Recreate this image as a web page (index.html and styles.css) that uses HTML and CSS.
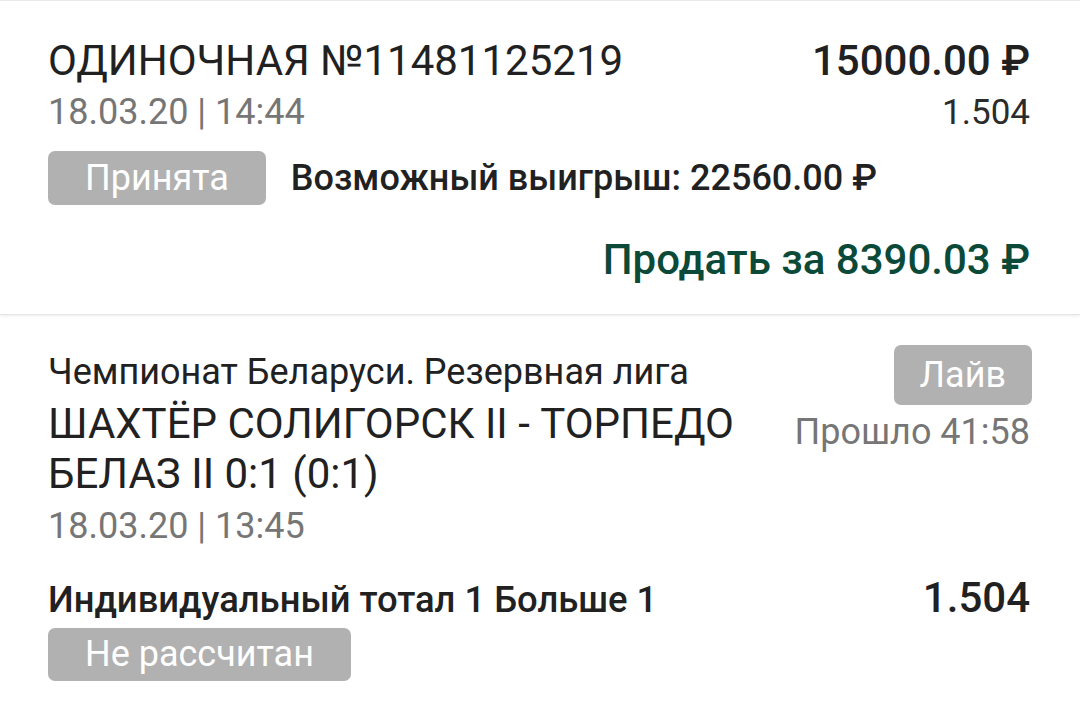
FILE: index.html
```html
<!DOCTYPE html>
<html lang="ru">
<head>
<meta charset="utf-8">
<title>Ставка</title>
<link rel="stylesheet" href="styles.css">
</head>
<body>
<div class="page">
  <section class="card bet">
    <div class="row">
      <div class="bet-title">ОДИНОЧНАЯ №11481125219</div>
      <div class="bet-sum">15000.00 ₽</div>
    </div>
    <div class="row">
      <div class="date">18.03.20 | 14:44</div>
      <div class="coef">1.504</div>
    </div>
    <div class="status-row">
      <span class="badge">Принята</span>
      <span class="win">Возможный выигрыш: 22560.00 ₽</span>
    </div>
    <div class="sell">Продать за 8390.03 ₽</div>
  </section>
  <section class="card event">
    <div class="event-head">
      <div class="event-main">
        <div class="league">Чемпионат Беларуси. Резервная лига</div>
        <div class="match">ШАХТЁР СОЛИГОРСК II - ТОРПЕДО БЕЛАЗ II 0:1 (0:1)</div>
        <div class="date event-date">18.03.20 | 13:45</div>
      </div>
      <div class="event-side">
        <span class="badge live">Лайв</span>
        <div class="elapsed">Прошло 41:58</div>
      </div>
    </div>
    <div class="market-row">
      <div class="market">Индивидуальный тотал 1 Больше 1</div>
      <div class="market-coef">1.504</div>
    </div>
    <span class="badge pending">Не рассчитан</span>
  </section>
</div>
</body>
</html>
```
FILE: styles.css
```css
html, body {
  margin: 0;
  padding: 0;
}
body {
  background: #fff;
  font-family: Roboto, "Noto Sans", "Liberation Sans", sans-serif;
  color: #212121;
  width: 1080px;
  height: 705px;
  overflow: hidden;
}
.page {
  display: flex;
  flex-direction: column;
  border-top: 1px solid #ececec;
}
.card {
  background: #fff;
  padding: 0 50px 0 48px;
}
.bet {
  position: relative;
  z-index: 1;
  padding-top: 33px;
  padding-bottom: 29px;
  border-bottom: 1px solid #e6e6e6;
  box-shadow: 0 1px 3px rgba(0, 0, 0, 0.08);
}
.row {
  display: flex;
  justify-content: space-between;
  align-items: baseline;
}
.bet-title {
  font-size: 42px;
  line-height: 54px;
}
.bet-sum {
  font-size: 42px;
  line-height: 54px;
  font-weight: 500;
}
.date {
  font-size: 36px;
  line-height: 48px;
  color: #767676;
}
.coef {
  font-size: 35px;
  line-height: 48px;
  color: #2b2b2b;
}
.status-row {
  display: flex;
  align-items: center;
  gap: 25px;
  margin-top: 14px;
}
.badge {
  display: inline-block;
  background: #b1b1b1;
  color: #fff;
  font-size: 36px;
  line-height: 54px;
  height: 54px;
  border-radius: 7px;
  padding: 0 37px;
  box-sizing: border-box;
}
.win {
  font-size: 36px;
  font-weight: 500;
}
.sell {
  margin-top: 30px;
  text-align: right;
  font-size: 42px;
  line-height: 50px;
  font-weight: 500;
  color: #0b4a38;
}
.event {
  padding-top: 30px;
  padding-bottom: 40px;
}
.event-head {
  display: flex;
  gap: 40px;
}
.event-main {
  flex: 1;
  min-width: 0;
}
.league {
  font-size: 36px;
  line-height: 54px;
}
.match {
  font-size: 42px;
  line-height: 50px;
}
.event-date {
  line-height: 48px;
  margin-top: 3px;
}
.event-side {
  flex: none;
  display: flex;
  flex-direction: column;
  align-items: flex-end;
}
.live {
  height: 60px;
  line-height: 60px;
  padding: 0 26px;
  margin-right: -2px;
}
.elapsed {
  font-size: 36px;
  line-height: 50px;
  color: #767676;
  margin-top: 2px;
}
.market-row {
  display: flex;
  justify-content: space-between;
  align-items: baseline;
  margin-top: 28px;
}
.market {
  font-size: 36.4px;
  line-height: 40px;
  font-weight: 500;
}
.market-coef {
  font-size: 42px;
  line-height: 40px;
  font-weight: 500;
}
.pending {
  margin-top: 8px;
  height: 53px;
  line-height: 53px;
}
```
